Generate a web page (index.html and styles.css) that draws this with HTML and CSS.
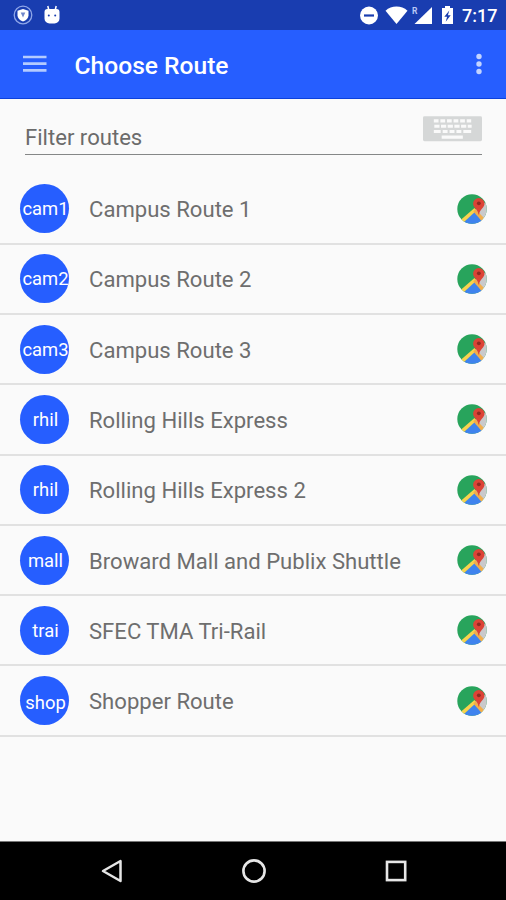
FILE: index.html
```
<!DOCTYPE html>
<html lang="en">
<head>
<meta charset="utf-8">
<title>Choose Route</title>
<link rel="stylesheet" href="styles.css">
</head>
<body>
<svg class="defs" width="0" height="0">
  <defs>
    <clipPath id="disc"><circle cx="15" cy="15" r="14.7"/></clipPath>
    <symbol id="map" viewBox="0 0 30 30">
      <g clip-path="url(#disc)">
        <rect width="30" height="30" fill="#28a45c"/>
        <path d="M19 15 30 7v21l-6 2-9-10z" fill="#c9c9cb"/>
        <path d="M5 30 17.500 17 27 30z" fill="#3f83ee"/>
        <path d="M3 26.500 17.500 14l2 2.500L6.500 28.500z" fill="#f7d34e"/>
        <path d="m16.300 17.500 2.200-2.200 8.500 8.700-2.500 2.700z" fill="#f2ae4b"/>
      </g>
      <path d="M21.800 4a5.700 5.700 0 0 0-5.700 5.700c0 4 4.600 5 5.400 10.800h.6c.8-5.800 5.400-6.800 5.400-10.800A5.700 5.700 0 0 0 21.800 4z" fill="#dc4336"/>
      <circle cx="21.800" cy="9.300" r="1.900" fill="#8c2a22"/>
    </symbol>
  </defs>
</svg>
<div class="screen">
  <div class="status">
    <svg class="shield" width="20" height="20" viewBox="0 0 20 20"><circle cx="10" cy="10" r="8.800" fill="none" stroke="#8fa6e8" stroke-width="1.300"/><path d="M10 4 15.500 5.800v4.400c0 3-2.200 5-5.500 6.300-3.300-1.300-5.500-3.300-5.500-6.300V5.800z" fill="#fff"/><path d="M7.700 7.500h4.600L10 12.500z" fill="#7188ca"/></svg>
    <svg class="droid" width="18" height="20" viewBox="0 0 18 20"><path d="m4.800 1 1 4M13.200 1l-1 4" stroke="#fff" stroke-width="1.500"/><path d="M4.500 4h9a3 3 0 0 1 3 3v6.500a5 5 0 0 1-5 5h-5a5 5 0 0 1-5-5V7a3 3 0 0 1 3-3z" fill="#fff"/><circle cx="5.800" cy="10.500" r="1" fill="#193db0"/><circle cx="12.200" cy="10.500" r="1" fill="#193db0"/></svg>
    <svg class="signals" width="98" height="22" viewBox="0 0 98 22">
      <circle cx="11" cy="11.500" r="9" fill="#fff"/><path d="M6 11.500h10" stroke="#193db0" stroke-width="2.200"/>
      <path d="M27.500 6.700a16.500 16.500 0 0 1 22 0L38.500 20z" fill="#fff"/>
      <path d="M74.500 3v17H57z" fill="#fff" transform="translate(-.5 0)"/>
      <text x="54" y="9.500" class="roam">R</text>
      <path d="M84 4h3V2h5v2h3v16H84z" fill="#fff"/><path d="m91.300 6.500-5 6.200h2.800l-1.400 5 5-6.400h-2.800z" fill="#193db0"/>
    </svg>
    <span class="clock">7:17</span>
  </div>
  <header class="appbar">
    <svg class="menu" width="24" height="20" viewBox="0 0 24 20"><path d="M0 3h23.500M0 9.700h23.500M0 16.400h23.500" stroke="#b4cbff" stroke-width="2.700"/></svg>
    <h1>Choose Route</h1>
    <svg class="more" width="6" height="22" viewBox="0 0 6 22"><g fill="#c3d4ff"><circle cx="3" cy="3.500" r="2.700"/><circle cx="3" cy="11" r="2.700"/><circle cx="3" cy="18.500" r="2.700"/></g></svg>
  </header>
  <div class="filter">
    <div class="field">
      <span>Filter routes</span>
      <svg class="keyboard" width="59" height="26" viewBox="0 0 60 26"><rect width="60" height="25.500" rx="1.500" fill="#d5d7d7"/><g stroke="#fafafa" stroke-width="3.200"><path d="M11 4.800h38" stroke-dasharray="4.800 1.900"/><path d="M11.500 10.200h38" stroke-dasharray="5.300 1.500"/><path d="M11 15.500h7m2 0h5m2 0h5m2 0h5m2 0h8M19 21.300h21.500"/></g></svg>
    </div>
  </div>
  <main class="routes">
    <div class="row"><span class="badge">cam1</span><span class="name">Campus Route 1</span><svg class="map"><use href="#map"/></svg></div>
    <div class="row"><span class="badge">cam2</span><span class="name">Campus Route 2</span><svg class="map"><use href="#map"/></svg></div>
    <div class="row"><span class="badge">cam3</span><span class="name">Campus Route 3</span><svg class="map"><use href="#map"/></svg></div>
    <div class="row"><span class="badge">rhil</span><span class="name">Rolling Hills Express</span><svg class="map"><use href="#map"/></svg></div>
    <div class="row"><span class="badge">rhil</span><span class="name">Rolling Hills Express 2</span><svg class="map"><use href="#map"/></svg></div>
    <div class="row"><span class="badge">mall</span><span class="name">Broward Mall and Publix Shuttle</span><svg class="map"><use href="#map"/></svg></div>
    <div class="row"><span class="badge">trai</span><span class="name">SFEC TMA Tri-Rail</span><svg class="map"><use href="#map"/></svg></div>
    <div class="row"><span class="badge low">shop</span><span class="name">Shopper Route</span><svg class="map"><use href="#map"/></svg></div>
  </main>
  <nav class="navbar">
    <svg width="24" height="26" viewBox="0 0 24 26"><path d="M20.500 3v20L3 13z" fill="none" stroke="#e6e6e6" stroke-width="2.500" stroke-linejoin="round"/></svg>
    <svg width="26" height="26" viewBox="0 0 26 26"><circle cx="13" cy="13" r="10.600" fill="none" stroke="#e6e6e6" stroke-width="2.600"/></svg>
    <svg width="24" height="26" viewBox="0 0 24 26"><rect x="3" y="3.900" width="18.200" height="18.200" fill="none" stroke="#e6e6e6" stroke-width="2.600"/></svg>
  </nav>
</div>
</body>
</html>
```
FILE: styles.css
```
* { box-sizing: border-box; }
body { margin: 0; font-family: Roboto, "Liberation Sans", sans-serif; background: #fafafa; }
svg { display: block; flex: none; }
.defs { position: absolute; }
.screen { width: 506px; height: 900px; display: flex; flex-direction: column; overflow: hidden; }

.status { height: 30px; flex: none; display: flex; align-items: center; background: #193db0; padding: 0 9px 0 13px; color: #fff; }
.droid { margin-left: 10px; margin-top: -1px; }
.signals { margin-left: auto; }
.roam { font-size: 8.500px; font-weight: 700; fill: #b9c8f5; }
.clock { width: 35px; margin-left: 6px; font-size: 18px; line-height: 30px; font-weight: 500; white-space: nowrap; padding-top: 1px; }

.appbar { height: 69px; flex: none; display: flex; align-items: center; background: #265eff; border-bottom: 1px solid #0c41dc; padding: 0 24px 0 23px; }
.appbar h1 { margin: 4px 0 0 27.500px; font-size: 24.600px; line-height: 30px; font-weight: 500; color: #fff; }
.more { margin-left: auto; }

.filter { height: 75.400px; flex: none; padding: 17px 24px 0 25px; }
.field { height: 39px; display: flex; justify-content: space-between; border-bottom: 1.500px solid #858787; font-size: 22.100px; line-height: 43px; color: #6b6b6b; }

.routes { flex: 1; }
.row { height: 70.300px; display: flex; align-items: center; border-bottom: 2px solid #e1e1e1; padding: 0 19px 0 20px; }
.badge { width: 49px; height: 49px; flex: none; border-radius: 50%; background: #265eff; color: #fff; font-size: 18.400px; line-height: 50px; display: flex; justify-content: center; overflow: hidden; padding-left: 2px; }
.low { line-height: 54px; }
.name { margin-left: 20px; font-size: 22.100px; line-height: 30px; color: #6e6e6e; padding-top: 1px; white-space: nowrap; }
.map { width: 30px; height: 30px; margin-left: auto; }

.navbar { height: 59px; flex: none; display: flex; align-items: center; justify-content: space-between; background: #000; border-top: 1px solid #777; padding: 0 98px 0 100px; }
```
